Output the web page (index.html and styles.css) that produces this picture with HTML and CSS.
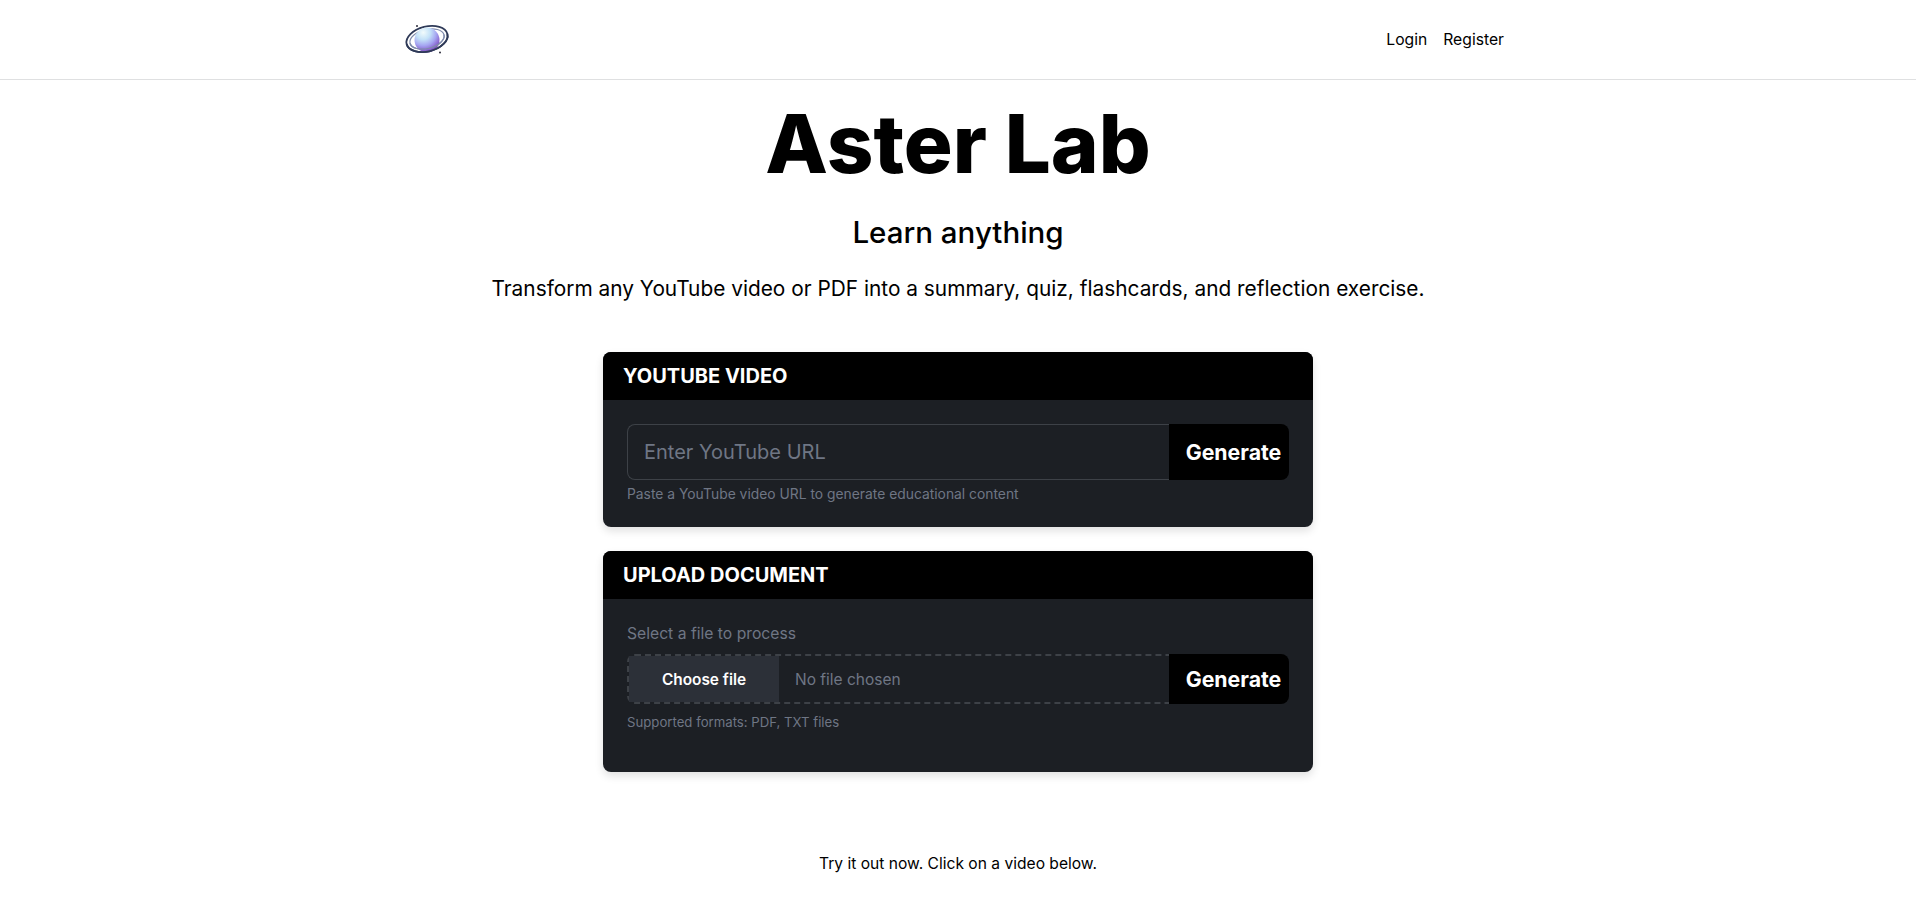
FILE: index.html
```html
<!DOCTYPE html>
<html lang="en">
<head>
  <meta charset="UTF-8">
  <meta name="viewport" content="width=device-width, initial-scale=1.0">
  <title>Aster Lab</title>
  <link rel="stylesheet" href="styles.css">
</head>
<body>
<nav class="navbar">
  <div class="nav-inner">
    <a class="brand" href="#" aria-label="Aster Lab">
      <svg class="logo" width="46" height="38" viewBox="0 0 46 38">
        <defs>
          <radialGradient id="planet" cx="0.35" cy="0.2" r="0.95">
            <stop offset="0" stop-color="#f2fbfc"/>
            <stop offset="0.3" stop-color="#c4e2f8"/>
            <stop offset="0.55" stop-color="#a6a6f2"/>
            <stop offset="0.8" stop-color="#8458c8"/>
            <stop offset="1" stop-color="#221c40"/>
          </radialGradient>
        </defs>
        <g transform="rotate(-14 23 18)" fill="none">
          <ellipse cx="23" cy="18" rx="21" ry="12.500" stroke="#2f3a58" stroke-width="1.800"/>
          <ellipse cx="23" cy="18" rx="17.500" ry="9.500" stroke="#7f8bab" stroke-width="1.200"/>
        </g>
        <circle cx="23" cy="19" r="12.500" fill="url(#planet)"/>
        <g transform="rotate(-14 23 18)" fill="none">
          <path d="M2 18 A21 12.500 0 0 0 44 18" stroke="#2f3a58" stroke-width="1.800"/>
          <path d="M5.500 18 A17.500 9.500 0 0 0 40.500 18" stroke="#7f8bab" stroke-width="1.200"/>
        </g>
        <circle cx="13" cy="5" r="1" fill="#2b2b3a"/>
        <circle cx="36" cy="31.500" r="1" fill="#2b2b3a"/>
      </svg>
    </a>
    <div class="nav-links">
      <a href="#">Login</a>
      <a href="#">Register</a>
    </div>
  </div>
</nav>
<main class="page">
  <h1 class="title">Aster Lab</h1>
  <h2 class="subtitle">Learn anything</h2>
  <p class="lead">Transform any YouTube video or PDF into a summary, quiz, flashcards, and reflection exercise.</p>

  <section class="card">
    <h3 class="card-header">YOUTUBE VIDEO</h3>
    <div class="card-body">
      <div class="input-group">
        <input class="url-input" type="text" placeholder="Enter YouTube URL">
        <button class="generate-btn">Generate</button>
      </div>
      <p class="hint hint-url">Paste a YouTube video URL to generate educational content</p>
    </div>
  </section>

  <section class="card">
    <h3 class="card-header">UPLOAD DOCUMENT</h3>
    <div class="card-body card-body-upload">
      <p class="file-label">Select a file to process</p>
      <div class="input-group">
        <div class="file-input">
          <span class="file-btn">Choose file</span>
          <span class="file-name">No file chosen</span>
        </div>
        <button class="generate-btn generate-btn-file">Generate</button>
      </div>
      <p class="hint hint-file">Supported formats: PDF, TXT files</p>
    </div>
  </section>

  <p class="try-it">Try it out now. Click on a video below.</p>
</main>
</body>
</html>
```

FILE: styles.css
```css
* {
  margin: 0;
  padding: 0;
  box-sizing: border-box;
}
body {
  font-family: 'Inter', 'Open Sans', sans-serif;
  background-color: #ffffff;
  color: #000000;
}
a {
  color: inherit;
  text-decoration: none;
}
.navbar {
  height: 80px;
  border-bottom: 1px solid #dfe0e1;
}
.nav-inner {
  width: 1140px;
  height: 79px;
  margin: 0 auto;
  padding: 0 24px 0 16px;
  display: flex;
  align-items: center;
  justify-content: space-between;
}
.brand {
  display: flex;
}
.nav-links {
  display: flex;
  gap: 16px;
  font-size: 15.700px;
}
.page {
  display: flex;
  flex-direction: column;
  align-items: center;
}
.title {
  font-size: 81.500px;
  font-weight: 800;
  line-height: 94px;
  margin-top: 17px;
}
.subtitle {
  font-size: 29.500px;
  font-weight: 500;
  line-height: 40px;
  margin-top: 21px;
}
.lead {
  font-size: 20.850px;
  line-height: 30px;
  margin-top: 22px;
  margin-bottom: 48px;
}
.card {
  width: 710px;
  margin-bottom: 24px;
  border-radius: 8px;
  background-color: #1c1f24;
  overflow: hidden;
  box-shadow: 0 4px 8px rgba(0, 0, 0, 0.12);
}
.card-header {
  height: 48px;
  padding-left: 20px;
  background-color: #000000;
  color: #ffffff;
  font-size: 20px;
  font-weight: 700;
  line-height: 49px;
}
.card-body {
  padding: 24px 24px 0;
  height: 127px;
}
.card-body-upload {
  height: 173px;
  padding-top: 23px;
}
.input-group {
  display: flex;
}
.url-input {
  flex: 1;
  min-width: 0;
  height: 56px;
  padding: 0 16px;
  font-family: inherit;
  font-size: 20px;
  color: #ffffff;
  background-color: #1c1f24;
  border: 1px solid #3d4147;
  border-right: none;
  border-radius: 8px 0 0 8px;
  outline: none;
}
.url-input::placeholder {
  color: #6f7684;
  opacity: 1;
}
.generate-btn {
  width: 120px;
  height: 56px;
  padding-left: 9px;
  font-family: inherit;
  font-size: 21.300px;
  font-weight: 700;
  color: #ffffff;
  background-color: #000000;
  border: none;
  border-radius: 0 8px 8px 0;
}
.generate-btn-file {
  height: 50px;
}
.hint {
  color: #6f7684;
}
.hint-url {
  font-size: 13.850px;
  margin-top: 4px;
  line-height: 20px;
}
.hint-file {
  font-size: 13.200px;
  margin-top: 8px;
  line-height: 20px;
}
.file-label {
  font-size: 15.700px;
  line-height: 24px;
  color: #6f7684;
  margin-bottom: 8px;
}
.file-input {
  flex: 1;
  min-width: 0;
  height: 50px;
  display: flex;
  align-items: center;
  border: 2px dashed #3d4147;
  border-right: none;
  border-radius: 8px 0 0 8px;
}
.file-btn {
  width: 150px;
  height: 100%;
  display: flex;
  align-items: center;
  justify-content: center;
  background-color: #2c3038;
  color: #ffffff;
  font-size: 15.400px;
  font-weight: 600;
}
.file-name {
  padding-left: 16px;
  font-size: 15.500px;
  color: #6f7684;
}
.try-it {
  margin-top: 56px;
  font-size: 15.600px;
  line-height: 24px;
}
```
